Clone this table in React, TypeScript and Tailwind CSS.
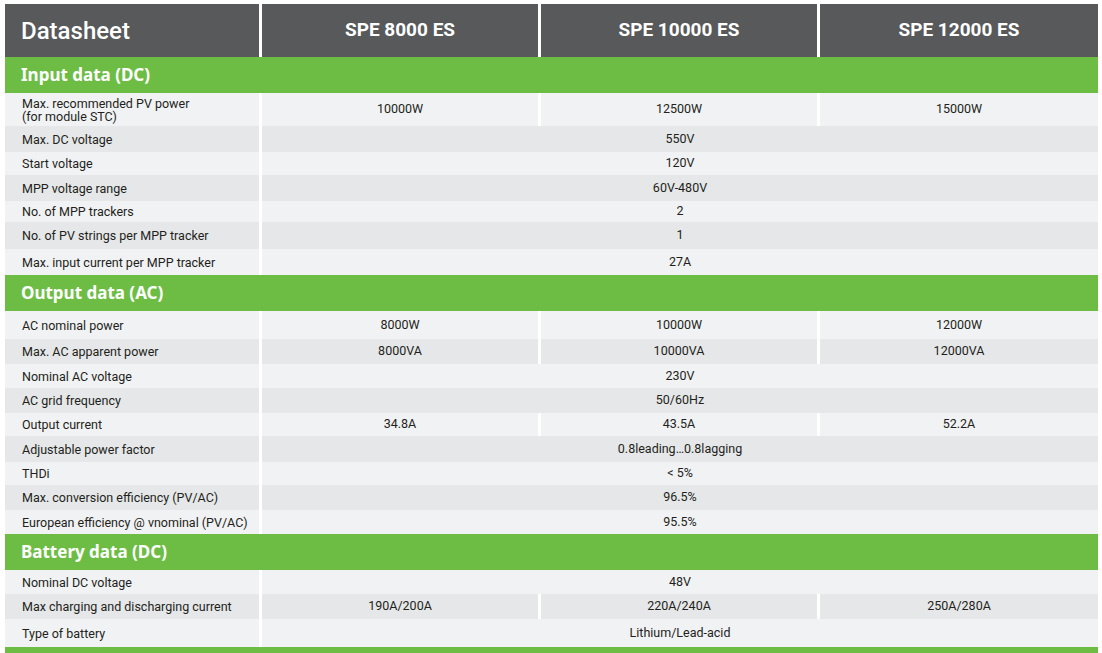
import React from "react"

type Row = {
    label: React.ReactNode
    values: string[]
    h: number
}

type Section = {
    title: string
    rows: Row[]
}

const models = ["SPE 8000 ES", "SPE 10000 ES", "SPE 12000 ES"]

const sections: Section[] = [
    {
        title: "Input data (DC)",
        rows: [
            {
                label: (
                    <>
                        Max. recommended PV power
                        <br />
                        (for module STC)
                    </>
                ),
                values: ["10000W", "12500W", "15000W"],
                h: 33,
            },
            { label: "Max. DC voltage", values: ["550V"], h: 26 },
            { label: "Start voltage", values: ["120V"], h: 23 },
            { label: "MPP voltage range", values: ["60V-480V"], h: 26 },
            { label: "No. of MPP trackers", values: ["2"], h: 21 },
            { label: "No. of PV strings per MPP tracker", values: ["1"], h: 27 },
            { label: "Max. input current per MPP tracker", values: ["27A"], h: 26 },
        ],
    },
    {
        title: "Output data (AC)",
        rows: [
            { label: "AC nominal power", values: ["8000W", "10000W", "12000W"], h: 28 },
            { label: "Max. AC apparent power", values: ["8000VA", "10000VA", "12000VA"], h: 25 },
            { label: "Nominal AC voltage", values: ["230V"], h: 24 },
            { label: "AC grid frequency", values: ["50/60Hz"], h: 25 },
            { label: "Output current", values: ["34.8A", "43.5A", "52.2A"], h: 23 },
            { label: "Adjustable power factor", values: ["0.8leading…0.8lagging"], h: 26 },
            { label: "THDi", values: ["< 5%"], h: 23 },
            { label: "Max. conversion efficiency (PV/AC)", values: ["96.5%"], h: 25 },
            { label: "European efficiency @ vnominal (PV/AC)", values: ["95.5%"], h: 24 },
        ],
    },
    {
        title: "Battery data (DC)",
        rows: [
            { label: "Nominal DC voltage", values: ["48V"], h: 24 },
            { label: "Max charging and discharging current", values: ["190A/200A", "220A/240A", "250A/280A"], h: 25 },
            { label: "Type of battery", values: ["Lithium/Lead-acid"], h: 28 },
        ],
    },
]

const SectionTitle: React.FC<{ title: string }> = ({ title }) => (
    <div className="col-span-4 h-[36px] bg-[#6dbd45] flex items-center pl-[16px] text-white text-[17px] font-bold font-['Noto_Sans',sans-serif]">
        {title}
    </div>
)

export default function App() {
    return (
        <div className="w-[1102px] h-[653px] overflow-hidden bg-white font-['Roboto',sans-serif] text-[#231f20]">
            <div className="ml-[5px] mt-[4px] w-[1093px] grid grid-cols-[254px_276px_276px_278px] gap-x-[3px]">
                <div className="h-[53px] bg-[#58595b] flex items-center pl-[16px] text-white text-[24px] font-medium">
                    Datasheet
                </div>
                {models.map(m => (
                    <div
                        key={m}
                        className="h-[53px] bg-[#58595b] flex items-center justify-center text-white text-[19px] font-bold"
                    >
                        {m}
                    </div>
                ))}

                {sections.map(section => (
                    <React.Fragment key={section.title}>
                        <SectionTitle title={section.title} />
                        {section.rows.map((row, i) => {
                            const bg = i % 2 === 0 ? "bg-[#f1f2f4]" : "bg-[#e6e7e9]"
                            const split = row.values.length > 1
                            return (
                                <React.Fragment key={i}>
                                    <div
                                        className={`${bg} flex items-center pl-[17px] text-[12.5px] leading-[13px]`}
                                        style={{ height: row.h }}
                                    >
                                        <span>{row.label}</span>
                                    </div>
                                    {split ? (
                                        row.values.map(v => (
                                            <div
                                                key={v}
                                                className={`${bg} flex items-center justify-center text-[12.5px]`}
                                                style={{ height: row.h }}
                                            >
                                                {v}
                                            </div>
                                        ))
                                    ) : (
                                        <div
                                            className={`${bg} col-span-3 flex items-center justify-center text-[12.5px]`}
                                            style={{ height: row.h }}
                                        >
                                            {row.values[0]}
                                        </div>
                                    )}
                                </React.Fragment>
                            )
                        })}
                    </React.Fragment>
                ))}
                <div className="col-span-4 h-[10px] bg-[#6dbd45]" />
            </div>
        </div>
    )
}
